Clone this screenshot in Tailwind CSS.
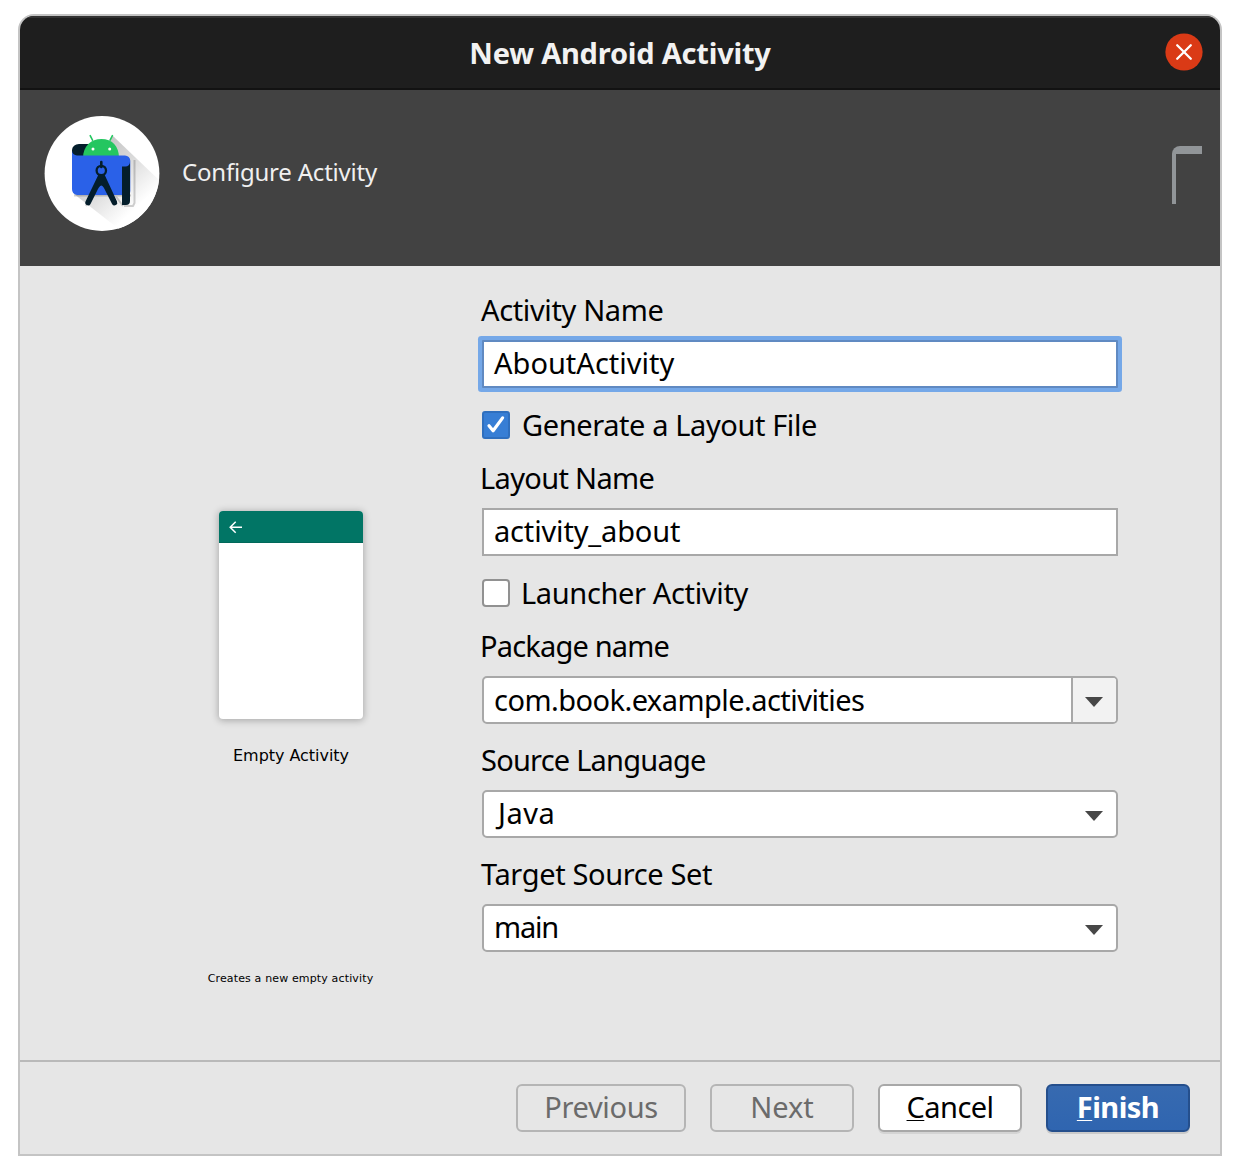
<!DOCTYPE html>
<html lang="en">
<head>
<meta charset="utf-8">
<title>New Android Activity</title>
<script src="https://cdn.jsdelivr.net/npm/@tailwindcss/browser@4"></script>
</head>
<body class="bg-white w-[1240px] h-[1174px] overflow-hidden pt-[14px] pl-[18px] font-['Noto_Sans',sans-serif] text-[29px] text-black">
<div class="w-[1204px] h-[1142px] flex flex-col border-2 border-[#c4c4c4] bg-[#e6e6e6] rounded-t-[16px] overflow-hidden">
  <header class="h-[74px] shrink-0 grid grid-cols-[1fr_auto_1fr] items-center bg-[#1e1e1e] border-t-2 border-t-[#323232] border-b-2 border-b-[#121212] px-[17px]">
    <span></span>
    <h1 class="font-bold text-[#f2f2f2] leading-9 tracking-[-0.214px] pb-px">New Android Activity</h1>
    <button class="justify-self-end w-[38px] h-[38px] mb-[2px]" aria-label="Close">
      <svg class="block" width="38" height="38" viewBox="0 0 38 38"><circle cx="19" cy="19" r="18.6" fill="#da3a16"/><path d="M12.2 12.2 25.8 25.8M25.8 12.2 12.2 25.8" stroke="#fff" stroke-width="2.3" stroke-linecap="round"/></svg>
    </button>
  </header>
  <section class="h-[176px] shrink-0 flex items-start bg-[#424242] pl-[24px] pr-[18px] pt-[25px]">
    <svg class="shrink-0" width="116" height="116" viewBox="0 0 116 116">
      <defs>
        <linearGradient id="sh" x1="35" y1="35" x2="90" y2="95" gradientUnits="userSpaceOnUse"><stop offset="0" stop-color="#bdbdbd"/><stop offset=".5" stop-color="#d9d9d9"/><stop offset="1" stop-color="#fff"/></linearGradient>
        <clipPath id="disc"><circle cx="58" cy="58.5" r="57.4"/></clipPath>
      </defs>
      <circle cx="58" cy="58.5" r="57.4" fill="#fff"/>
      <path clip-path="url(#disc)" d="M69 21 118 68V118H80L30 79Z" fill="url(#sh)"/>
      <path d="M30 80.5h57M42 91l10-18 10-5 17 23M80 91h9l1.500-3V45" fill="none" stroke="#000" stroke-opacity=".18" stroke-width="2"/>
      <path d="M46 29H35a7 6 0 0 0-7 6v15h22Z" fill="#041e2b"/>
      <path d="m46.200 20.600 2.300 4.600m19.900-4.600-2.300 4.600" stroke="#24c660" stroke-width="1.600" stroke-linecap="round"/>
      <path d="M39 43C39 31 47 24 57.500 24S75 31 75 43Z" fill="#24c660"/>
      <circle cx="49" cy="34" r="1.500" fill="#fff"/><circle cx="65.700" cy="34" r="1.500" fill="#fff"/>
      <path d="M28 35.500a5 5 0 0 0 5 5H81a5.300 5.300 0 0 1 5.300 5.300V76a4 4 0 0 1-4 4H33a6 6 0 0 1-5-6Z" fill="#2a61e8"/>
      <path d="M78 51.500h3.500a4.500 4.500 0 0 0 4.500-4.500V86a4 4 0 0 1-4 4H78Z" fill="#041e2b"/>
      <path d="M57.300 47v5" stroke="#041e2b" stroke-width="2.600" stroke-linecap="round"/>
      <circle cx="57.300" cy="55.500" r="4.700" fill="none" stroke="#041e2b" stroke-width="2.300"/>
      <path d="M54.500 59.500h6L73 86.500a2.800 2.800 0 0 1-4.800 2.800L61.500 76C60.300 73 58.800 70.500 57.300 70.500S54.300 73 53 76L46.500 89a2.800 2.800 0 0 1-5-2.500Z" fill="#041e2b"/>
    </svg>
    <h2 class="ml-[22px] mt-[41px] text-2xl leading-8 tracking-[-0.207px] text-[#f0f0f0]">Configure Activity</h2>
    <div class="ml-auto mt-[31px] w-[30px] h-[58px] border-t-8 border-l-4 border-[#919598] rounded-tl-[8px]"></div>
  </section>
  <main class="h-[794px] shrink-0 flex">
    <aside class="w-[462px] shrink-0 flex flex-col items-center pt-[245px] pl-[80px] font-['DejaVu_Sans',sans-serif]">
      <div class="w-[144px] h-[208px] rounded-[4px] bg-white overflow-hidden shadow-[0_1px_7px_1px_rgba(0,0,0,0.25)]">
        <div class="h-[32px] bg-[#017565] border-b border-[#01685a] pl-[10px] pt-[10px]">
          <svg width="14" height="13" viewBox="0 0 14 13"><path d="M6.700 .8 1.200 6.300 6.700 11.800M1.200 6.300H13" fill="none" stroke="#fff" stroke-width="1.500"/></svg>
        </div>
      </div>
      <p class="mt-[27px] text-base leading-5 tracking-[-0.04px]">Empty Activity</p>
      <p class="mt-[206px] text-[11px] leading-[14px] tracking-[0.146px] -ml-[1px]">Creates a new empty activity</p>
    </aside>
    <form class="w-[636px] flex flex-col">
      <label class="mt-[26px] h-[36px] leading-[36px] mb-[12px] -ml-px tracking-[-0.362px]">Activity Name</label>
      <div class="h-[48px] border-2 border-[#608ac2] bg-white ring-4 ring-[#75a8e8] rounded-[1px] pl-[10px] leading-[42px] tracking-[0.009px]">AboutActivity</div>
      <div class="mt-[19px] h-[36px] flex items-center">
        <svg width="28" height="28" viewBox="0 0 28 28"><rect x="1" y="1" width="26" height="26" rx="2" fill="#377ed5" stroke="#2f6fbe" stroke-width="2"/><path d="m7 14.800 4.100 5L20.600 6.900" fill="none" stroke="#fff" stroke-width="3.200" stroke-linecap="round" stroke-linejoin="round"/></svg>
        <span class="ml-[12px] leading-[36px] tracking-[-0.397px]">Generate a Layout File</span>
      </div>
      <label class="mt-[17px] h-[36px] leading-[36px] mb-[12px] -ml-[2px] tracking-[-0.666px]">Layout Name</label>
      <div class="h-[48px] border-2 border-[#a8a8a8] bg-white pl-[10px] leading-[42px] tracking-[-0.158px]">activity_about</div>
      <div class="mt-[19px] h-[36px] flex items-center">
        <div class="w-[28px] h-[28px] border-2 border-[#919191] bg-white rounded-[4px]"></div>
        <span class="ml-[11px] leading-[36px] tracking-[-0.351px]">Launcher Activity</span>
      </div>
      <label class="mt-[17px] h-[36px] leading-[36px] mb-[12px] -ml-[2px] tracking-[-0.821px]">Package name</label>
      <div class="h-[48px] flex border-2 border-[#a8a8a8] bg-white rounded-[5px] overflow-hidden">
        <span class="flex-1 pl-[10px] leading-[43px] tracking-[-0.544px]">com.book.example.activities</span>
        <span class="w-[45px] border-l-2 border-[#a8a8a8] bg-[#f2f2f2] pl-[12px] pt-[19px]"><svg width="18" height="10" viewBox="0 0 18 10"><path d="M0 0H18L9 10Z" fill="#474747"/></svg></span>
      </div>
      <label class="mt-[18px] h-[36px] leading-[36px] mb-[12px] -ml-px tracking-[-0.775px]">Source Language</label>
      <div class="h-[48px] flex border-2 border-[#a8a8a8] bg-white rounded-[5px]">
        <span class="flex-1 pl-[14px] leading-[42px] tracking-[0.5px]">Java</span>
        <span class="w-[31px] pt-[19px]"><svg width="18" height="10" viewBox="0 0 18 10"><path d="M0 0H18L9 10Z" fill="#474747"/></svg></span>
      </div>
      <label class="mt-[18px] h-[36px] leading-[36px] mb-[12px] -ml-px tracking-[-0.365px]">Target Source Set</label>
      <div class="h-[48px] flex border-2 border-[#a8a8a8] bg-white rounded-[5px]">
        <span class="flex-1 pl-[10px] leading-[42px] tracking-[-1.2px]">main</span>
        <span class="w-[31px] pt-[19px]"><svg width="18" height="10" viewBox="0 0 18 10"><path d="M0 0H18L9 10Z" fill="#474747"/></svg></span>
      </div>
    </form>
  </main>
  <footer class="flex-1 flex justify-end border-t-2 border-[#b9b9b9] pt-[22px] pr-[30px] gap-[24px] leading-[42px]">
    <button class="w-[170px] h-[48px] flex justify-center border-2 border-[#b5b5b5] rounded-[6px] text-[#6b6b6b] tracking-[-0.343px]">Previous</button>
    <button class="w-[144px] h-[48px] flex justify-center border-2 border-[#b5b5b5] rounded-[6px] text-[#6b6b6b] tracking-[-0.052px]">Next</button>
    <button class="w-[144px] h-[48px] flex justify-center border-2 border-[#a8a8a8] bg-white rounded-[6px] shadow-[0_2px_0_rgba(0,0,0,0.08)] tracking-[-0.559px]"><span class="underline decoration-1 underline-offset-[2px] [text-decoration-skip-ink:none]">C</span>ancel</button>
    <button class="w-[144px] h-[48px] flex justify-center border-2 border-[#254f8c] bg-linear-to-b from-[#376ab0] to-[#2f65b0] rounded-[6px] shadow-[0_2px_0_rgba(0,0,0,0.12)] text-white font-bold tracking-[-0.534px]"><span class="underline decoration-1 underline-offset-[2px] [text-decoration-skip-ink:none]">F</span>inish</button>
  </footer>
</div>
</body>
</html>
